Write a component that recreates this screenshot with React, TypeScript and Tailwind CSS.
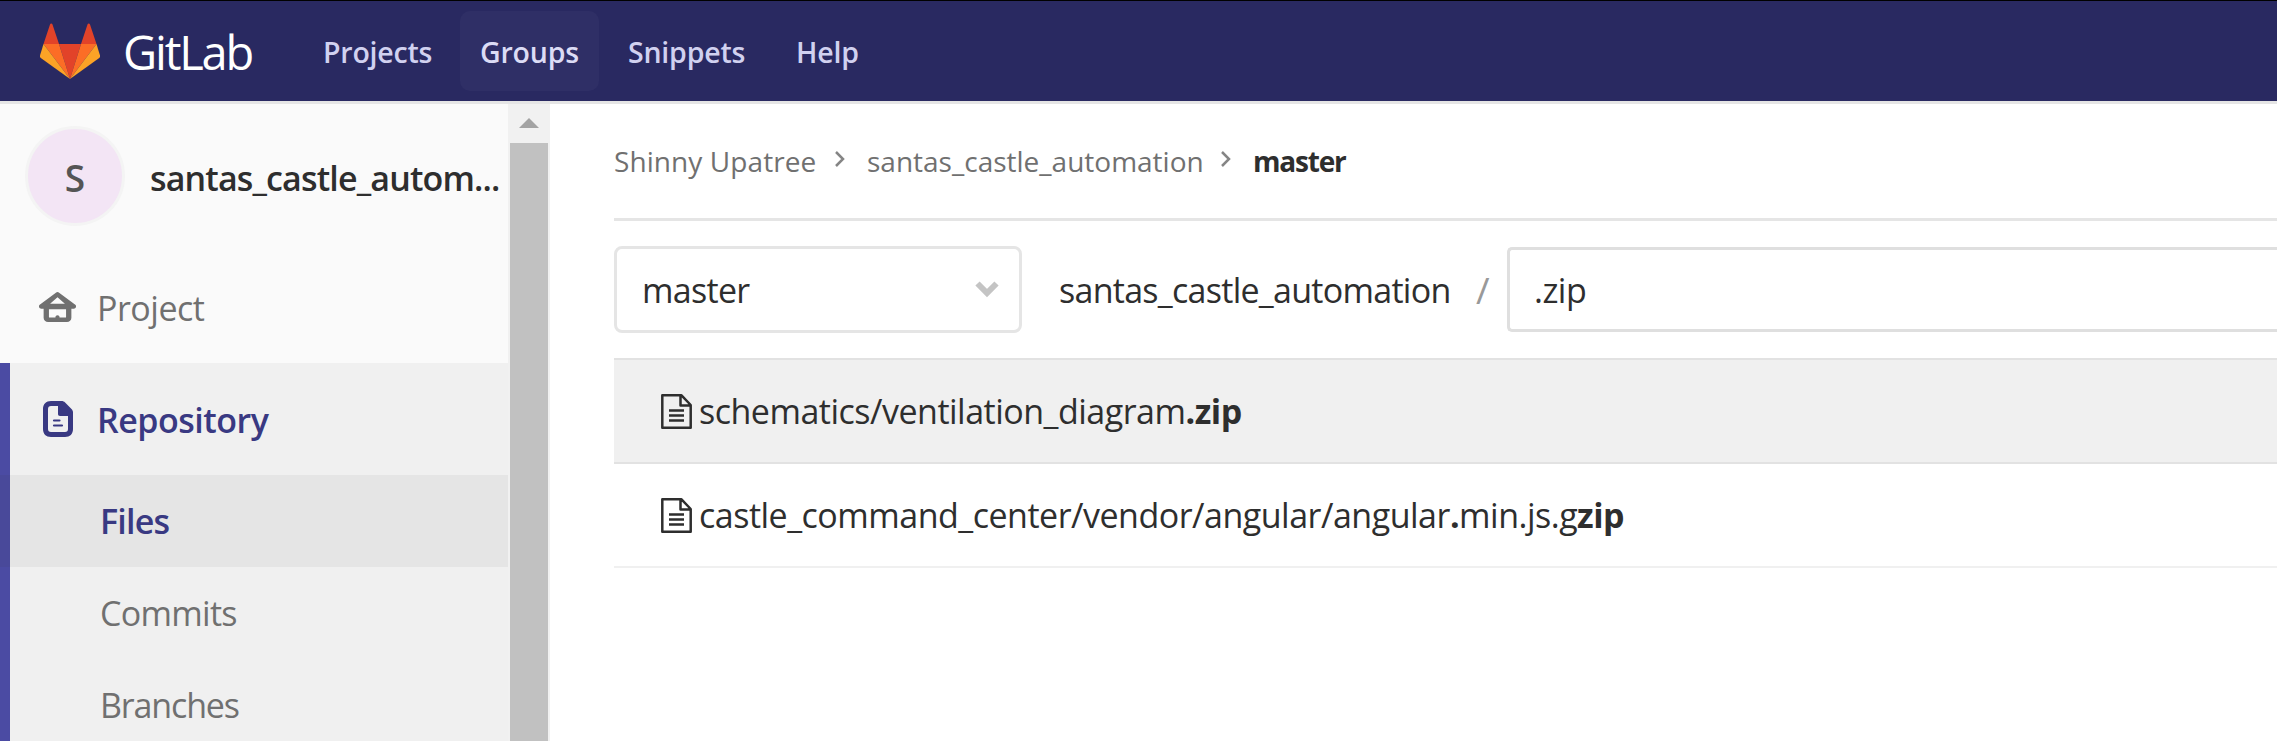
import type { ReactNode } from "react";

function Logo() {
  return (
    <svg className="ml-[40px] mt-[22px] h-[56px] w-[60px] shrink-0" viewBox="0 0 60 56">
      <path fill="#e24329" d="M30 56 41 21H19Z" />
      <path fill="#fc6d26" d="M30 56 19 21H3.500Z" />
      <path fill="#fca326" d="M3.500 21 0 32.500c-.2 1 0 2 .8 2.600L30 56Z" />
      <path fill="#e24329" d="M3.500 21H19L12.500 1.500c-.4-1.300-2.100-1.300-2.500 0Z" />
      <path fill="#fc6d26" d="M30 56 41 21h15.500Z" />
      <path fill="#fca326" d="M56.500 21 60 32.500c.2 1 0 2-.8 2.600L30 56Z" />
      <path fill="#e24329" d="M56.500 21H41l6.500-19.500c.4-1.300 2.100-1.300 2.500 0Z" />
    </svg>
  );
}

function HomeIcon() {
  return (
    <svg className="h-[36px] w-[37px] shrink-0" viewBox="0 0 16 16" preserveAspectRatio="none" fill="#707070">
      <path
        fillRule="evenodd"
        d="M7.300 1.200a1 1 0 0 1 1.400 0l7 5.400A1 1 0 0 1 15 8.350h-1v4a1.900 1.900 0 0 1-1.900 1.900H3.900A1.900 1.900 0 0 1 2 12.350v-4H1A1 1 0 0 1 .3 6.600ZM8 3.200 4.800 6.100h6.400ZM4.300 8.600v3.600h2.800c0-.6.4-1 .9-1s.9.4.9 1h2.800V8.600Z"
      />
    </svg>
  );
}

function DocIcon() {
  return (
    <svg className="h-[36px] w-[30px] shrink-0" viewBox="0 0 30 36">
      <path
        fill="#393982"
        fillRule="evenodd"
        d="M8 0h10.500c1.500 0 2.600.5 3.600 1.500l6.400 6.600c1 1 1.500 2.200 1.500 3.600V28c0 5-3 8-8 8H8c-5 0-8-3-8-8V8c0-5 3-8 8-8Zm0 5C6 5 5 6 5 8v20c0 2 1 3 3 3h14c2 0 3-1 3-3V15h-8c-1.300 0-2-.7-2-2V5Z"
      />
      <path stroke="#393982" strokeWidth="2.200" strokeLinecap="round" d="M11 19.500h5.500M11 24.500h8" />
    </svg>
  );
}

function FileIcon() {
  return (
    <svg className="h-[35px] w-[31px] shrink-0" viewBox="0 0 31 35" fill="none" stroke="#2e2e2e" strokeWidth="2.500">
      <path strokeLinejoin="round" d="M1.300 1.300H20.500L29.700 11v22.700H1.300ZM19.500 1.300V11.500h10" />
      <path d="M8 16.500h15M8 21.500h15M8 26.500h15" />
    </svg>
  );
}

function Crumb() {
  return (
    <svg className="mt-[-5px] h-[16px] w-[10px] shrink-0" viewBox="0 0 10 16" fill="none" stroke="#858585" strokeWidth="2.500">
      <path d="m1 1 7 7-7 7" />
    </svg>
  );
}

function Sidebar() {
  return (
    <aside className="flex w-[550px] shrink-0">
      <div className="flex w-[508px] flex-col bg-[#fafafa]">
        <div className="flex h-[144px] items-center pl-[25px]">
          <div className="flex h-[100px] w-[100px] shrink-0 items-center justify-center rounded-full border-[3px] border-[#f4f4f4] bg-[#f3e5f5] pt-[4px] text-[37px] font-semibold text-[#555]">
            S
          </div>
          <div className="ml-[25px] whitespace-nowrap pt-[4px] text-[34px] font-semibold tracking-[-0.850px] text-[#2e2e2e]">
            santas_castle_autom...
          </div>
        </div>
        <div className="flex h-[115px] items-center pl-[39px] pt-[5px]">
          <HomeIcon />
          <span className="ml-[21px] text-[34px] tracking-[-0.500px] text-[#707070]">Project</span>
        </div>
        <div className="flex h-[112px] items-center border-l-[10px] border-[#4b4ba3] bg-[#f0f0f0] pl-[33px]">
          <DocIcon />
          <span className="ml-[24px] pt-[3px] text-[34px] font-semibold tracking-[-0.500px] text-[#393982]">Repository</span>
        </div>
        <div className="flex h-[92px] items-center border-l-[10px] border-[#49499a] bg-[#e5e5e5] pl-[90px] pt-px text-[34px] font-semibold tracking-[-0.800px] text-[#393982]">
          Files
        </div>
        <div className="flex h-[92px] items-center border-l-[10px] border-[#4b4ba3] bg-[#f0f0f0] pl-[90px] pt-px text-[34px] tracking-[-0.700px] text-[#707070]">
          Commits
        </div>
        <div className="flex h-[92px] items-center border-l-[10px] border-[#4b4ba3] bg-[#f0f0f0] pl-[90px] pt-px text-[34px] tracking-[-1.150px] text-[#707070]">
          Branches
        </div>
      </div>
      <div className="flex w-[42px] flex-col items-center bg-[#f1f1f1]">
        <svg className="mt-[14px] h-[10px] w-[20px] shrink-0" viewBox="0 0 20 10">
          <path fill="#a3a3a3" d="M10 0 20 10H0Z" />
        </svg>
        <div className="mt-[15px] w-[38px] grow bg-[#c1c1c1]" />
      </div>
    </aside>
  );
}

function Row({ selected, children }: { selected?: boolean; children: ReactNode }) {
  return (
    <div
      className={
        selected
          ? "flex h-[104px] items-center border-b-2 border-[#e2e2e2] bg-[#f0f0f0] pl-[47px]"
          : "flex h-[104px] items-center border-b-2 border-[#f0f0f0] pl-[47px]"
      }
    >
      <FileIcon />
      <span className="ml-[7px] whitespace-nowrap pt-px text-[34px] tracking-[-0.500px] text-[#2e2e2e]">{children}</span>
    </div>
  );
}

export default function App() {
  return (
    <div className="flex h-[741px] w-[2277px] flex-col overflow-hidden bg-white font-['Open_Sans','Noto_Sans',sans-serif]">
      <header className="flex h-[104px] shrink-0 border-b-[3px] border-t border-b-[#e5e5e5] border-t-black bg-[#292961]">
        <Logo />
        <div className="ml-[23px] w-[137px] pt-[15px] text-[47px] font-medium leading-[72px] tracking-[-2.200px] text-white">GitLab</div>
        <nav className="ml-[43px] flex pt-[10px] text-[28.500px] font-semibold tracking-[-0.200px] text-[#d1d1f0]">
          <div className="flex h-[80px] w-[157px] items-center pl-[20px] pt-[3px]">Projects</div>
          <div className="flex h-[80px] w-[139px] items-center rounded-[10px] bg-[#2f2f66] pl-[20px] pt-[3px] text-[#dcdcf5]">Groups</div>
          <div className="flex h-[80px] w-[168px] items-center pl-[29px] pt-[3px]">Snippets</div>
          <div className="flex h-[80px] items-center pl-[29px] pt-[3px]">Help</div>
        </nav>
      </header>
      <div className="flex grow">
        <Sidebar />
        <main className="flex grow flex-col pl-[64px]">
          <div className="flex h-[117px] items-center whitespace-nowrap border-b-[3px] border-[#e5e5e5] text-[28px] text-[#707070]">
            <span className="w-[221px] tracking-[0.080px]">Shinny Upatree</span>
            <Crumb />
            <span className="ml-[22px] w-[354px]">santas_castle_automation</span>
            <Crumb />
            <span className="ml-[22px] font-bold tracking-[-1.200px] text-[#2e2e2e]">master</span>
          </div>
          <div className="flex h-[137px] items-center text-[34px] text-[#2e2e2e]">
            <div className="flex h-[87px] w-[408px] shrink-0 items-center justify-between rounded-[8px] border-[3px] border-[#e5e5e5] pl-[25px] pr-[20px]">
              <span className="pt-[2px] tracking-[-0.700px]">master</span>
              <svg className="h-[17px] w-[24px]" viewBox="0 0 24 17" fill="none" stroke="#c4c4c4" strokeWidth="6">
                <path d="m2.500 2.500 9.500 9.500 9.500-9.500" />
              </svg>
            </div>
            <span className="ml-[37px] w-[417px] whitespace-nowrap pt-px tracking-[-0.720px]">santas_castle_automation</span>
            <span className="w-[31px] text-[37px] text-[#999]">/</span>
            <div className="flex h-[85px] grow items-center rounded-l-[5px] border-[3px] border-r-0 border-[#dfdfdf] pl-[24px] pt-px tracking-[-0.500px]">.zip</div>
          </div>
          <div className="border-t-2 border-[#e2e2e2]">
            <Row selected>
              schematics/ventilation_diagram<b>.zip</b>
            </Row>
            <Row>
              castle_command_center/vendor/angular/angular<b>.</b>min.js.g<b>zip</b>
            </Row>
          </div>
        </main>
      </div>
    </div>
  );
}
